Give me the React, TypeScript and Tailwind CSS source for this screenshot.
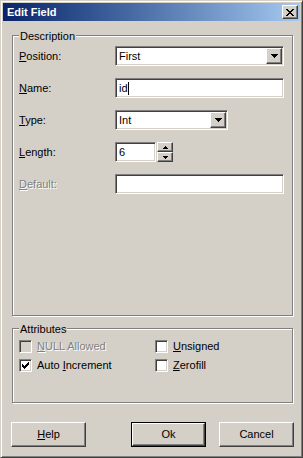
import React from 'react';

const FONT = { fontFamily: '"Liberation Sans", Arial, sans-serif' };

const SUNKEN =
  'border border-t-[#808080] border-l-[#808080] border-b-white border-r-white shadow-[inset_1px_1px_0_#404040,inset_-1px_-1px_0_#d4d0c8]';
const RAISED =
  'border border-t-white border-l-white border-b-[#404040] border-r-[#404040] shadow-[inset_-1px_-1px_0_#808080] bg-[#d4d0c8]';

function DownArrow() {
  return (
    <svg width="7" height="4" shapeRendering="crispEdges">
      <rect x="0" y="0" width="7" height="1" fill="#000" />
      <rect x="1" y="1" width="5" height="1" fill="#000" />
      <rect x="2" y="2" width="3" height="1" fill="#000" />
      <rect x="3" y="3" width="1" height="1" fill="#000" />
    </svg>
  );
}

function SmallArrow({ up }: { up?: boolean }) {
  return (
    <svg width="5" height="3" shapeRendering="crispEdges" className={up ? 'rotate-180' : ''}>
      <rect x="0" y="0" width="5" height="1" fill="#000" />
      <rect x="1" y="1" width="3" height="1" fill="#000" />
      <rect x="2" y="2" width="1" height="1" fill="#000" />
    </svg>
  );
}

function CloseGlyph() {
  const rows = [0, 1, 2, 3, 4, 5, 6];
  return (
    <svg width="8" height="7" shapeRendering="crispEdges">
      {rows.map((i) => (
        <g key={i}>
          <rect x={i} y={i} width="2" height="1" fill="#000" />
          <rect x={6 - i} y={i} width="2" height="1" fill="#000" />
        </g>
      ))}
    </svg>
  );
}

function CheckGlyph() {
  const pattern = ['......X', '.....XX', 'X...XXX', 'XX.XXX.', 'XXXXX..', '.XXX...', '..X....'];
  return (
    <svg width="7" height="7" shapeRendering="crispEdges">
      {pattern.map((row, y) =>
        row.split('').map((c, x) => (c === 'X' ? <rect key={`${x}-${y}`} x={x} y={y} width="1" height="1" fill="#000" /> : null))
      )}
    </svg>
  );
}

function Mn({ children }: { children: React.ReactNode }) {
  return <span className="underline underline-offset-[1px]">{children}</span>;
}

function Combo({ value, width }: { value: string; width: string }) {
  return (
    <div className={`${SUNKEN} ${width} h-[20px] bg-white flex items-center p-[1px]`}>
      <span className="flex-1 pl-[2px] text-black">{value}</span>
      <div className={`${RAISED} w-[16px] h-full flex items-center justify-center`}>
        <DownArrow />
      </div>
    </div>
  );
}

function Row({ label, disabled, children }: { label: React.ReactNode; disabled?: boolean; children: React.ReactNode }) {
  return (
    <div className="flex items-center h-[20px]">
      <div className={`w-[96px] ${disabled ? 'text-[#808080] [text-shadow:1px_1px_0_#fff]' : 'text-black'}`}>{label}</div>
      {children}
    </div>
  );
}

function Check({ label, checked, disabled }: { label: React.ReactNode; checked?: boolean; disabled?: boolean }) {
  return (
    <div className="flex items-center h-[13px] w-[136px]">
      <div className={`${SUNKEN} w-[13px] h-[13px] flex items-center justify-center ${disabled ? 'bg-[#d4d0c8]' : 'bg-white'}`}>
        {checked && <CheckGlyph />}
      </div>
      <span className={`ml-[5px] ${disabled ? 'text-[#808080] [text-shadow:1px_1px_0_#fff]' : 'text-black'}`}>{label}</span>
    </div>
  );
}

function Button({ children, isDefault }: { children: React.ReactNode; isDefault?: boolean }) {
  const inner = <div className={`${RAISED} w-full h-full flex items-center justify-center text-black`}>{children}</div>;
  return (
    <div className={`w-[75px] h-[25px] ${isDefault ? 'border border-black' : ''}`}>{inner}</div>
  );
}

export default function App() {
  return (
    <div style={FONT} className="w-[303px] h-[458px] bg-[#d4d0c8] text-[11px] leading-[13px] p-[2px] border border-t-[#d4d0c8] border-l-[#d4d0c8] border-b-[#404040] border-r-[#404040] shadow-[inset_1px_1px_0_#fff,inset_-1px_-1px_0_#808080] flex flex-col">
      {/* Title bar */}
      <div className="h-[18px] shrink-0 bg-linear-to-r from-[#0a246a] to-[#a6caf0] flex items-center justify-between pl-[4px] pr-[2px]">
        <span className="text-white font-bold">Edit Field</span>
        <div className={`${RAISED} w-[16px] h-[14px] flex items-center justify-center`}>
          <CloseGlyph />
        </div>
      </div>

      {/* Description */}
      <fieldset className="ml-[9px] mt-[6px] w-[281px] h-[289px] border border-[#808080] shadow-[inset_1px_1px_0_#fff,1px_1px_0_#fff]">
        <legend className="ml-[6px] px-[1px] pt-[3px] h-[16px] leading-[13px] bg-[#d4d0c8] text-black">Description</legend>
        <div className="pt-[3px] pl-[6px] flex flex-col gap-[12px]">
          <Row label={<><Mn>P</Mn>osition:</>}>
            <Combo value="First" width="w-[169px]" />
          </Row>
          <Row label={<><Mn>N</Mn>ame:</>}>
            <div className={`${SUNKEN} w-[169px] h-[20px] bg-white flex items-center pl-[3px]`}>
              <span>id</span>
              <span className="w-px h-[13px] bg-black" />
            </div>
          </Row>
          <Row label={<><Mn>T</Mn>ype:</>}>
            <Combo value="Int" width="w-[113px]" />
          </Row>
          <Row label={<><Mn>L</Mn>ength:</>}>
            <div className={`${SUNKEN} w-[41px] h-[20px] bg-white flex items-center pl-[3px]`}>6</div>
            <div className="w-[16px] h-[20px] ml-px flex flex-col">
              <div className={`${RAISED} h-[10px] flex items-center justify-center`}>
                <SmallArrow up />
              </div>
              <div className={`${RAISED} h-[10px] flex items-center justify-center`}>
                <SmallArrow />
              </div>
            </div>
          </Row>
          <Row label={<><Mn>D</Mn>efault:</>} disabled>
            <div className={`${SUNKEN} w-[169px] h-[20px] bg-white`} />
          </Row>
        </div>
      </fieldset>

      {/* Attributes */}
      <fieldset className="ml-[9px] mt-[4px] w-[281px] h-[83px] border border-[#808080] shadow-[inset_1px_1px_0_#fff,1px_1px_0_#fff]">
        <legend className="ml-[6px] px-[1px] pt-[3px] h-[16px] leading-[13px] bg-[#d4d0c8] text-black">Attributes</legend>
        <div className="pt-[4px] pl-[6px] grid grid-cols-[136px_1fr] gap-y-[6px]">
          <Check label={<><Mn>N</Mn>ULL Allowed</>} disabled />
          <Check label={<><Mn>U</Mn>nsigned</>} />
          <Check label={<>Auto <Mn>I</Mn>ncrement</>} checked />
          <Check label={<><Mn>Z</Mn>erofill</>} />
        </div>
      </fieldset>

      {/* Buttons */}
      <div className="mt-[19px] flex">
        <div className="ml-[8px]">
          <Button><Mn>H</Mn>elp</Button>
        </div>
        <div className="ml-[45px]">
          <Button isDefault>Ok</Button>
        </div>
        <div className="ml-[13px]">
          <Button>Cancel</Button>
        </div>
      </div>
    </div>
  );
}
